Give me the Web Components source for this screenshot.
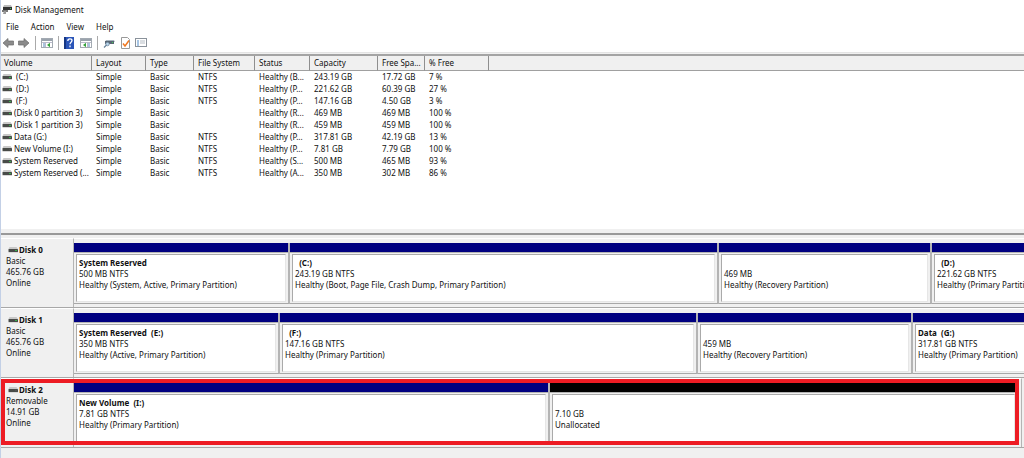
<!DOCTYPE html>
<html lang="en">
<head>
<meta charset="utf-8">
<title>Disk Management</title>
<style>
html,body{margin:0;height:100%}
body{background:#f0f0f0;color:#111;font:8px/11px "Noto Sans","Open Sans",sans-serif;overflow:hidden}
</style>
</head>
<body>
<disk-manager></disk-manager>
<script>
const define=(name,html,setup)=>customElements.define(name,class extends HTMLElement{
  constructor(){
    super();
    const t=document.createElement('template');
    t.innerHTML=html;
    this.attachShadow({mode:'open'}).append(t.content.cloneNode(true));
  }
  connectedCallback(){ if(setup) setup(this,this.shadowRoot); }
});

define('drive-icon',`
<style>:host{display:inline-block;width:10px;height:6px;flex:none}svg{display:block}:host([idle]) .led{fill:#555}</style>
<svg width="10" height="6" viewBox="0 0 10 6" aria-hidden="true">
<path d="M1.500 0h7L10 2H.5z" fill="#c9c9c9"/><rect x=".5" y="2" width="9.500" height="3" rx=".6" fill="#484b48"/>
<rect x=".5" y="5" width="9.500" height="1" fill="#d8d8d8"/><rect class="led" x="7" y="3" width="2" height="1" fill="#37b34a"/></svg>`);

define('title-bar',`
<style>:host{display:flex;align-items:center;gap:3px;height:19px;padding-left:1px;background:#fff}
h1{margin:0;font:inherit}svg{display:block}</style>
<svg width="10" height="11" viewBox="0 0 10 11" aria-hidden="true"><path d="M2 1h7l1 2H1z" fill="#bbb"/><rect x="1" y="3" width="9" height="3" fill="#333"/><rect x="8" y="4" width="1" height="1" fill="#3b5"/><path d="M0 6h6v2H0z" fill="#777"/><path d="M2 7h2v3H1z" fill="#999"/></svg>
<h1><slot></slot></h1>`);

define('menu-bar',`
<style>:host{display:block;background:#fff}nav{display:flex;height:14px;padding-left:5px;gap:12px}
button{all:unset;font:inherit;line-height:13px}</style>
<nav aria-label="Main menu"><button>File</button><button>Action</button><button>View</button><button>Help</button></nav>`);

define('tool-bar',`
<style>:host{display:flex;align-items:center;height:19px;padding-left:1px;background:#fff;border-bottom:1px solid #e4e4e4}
button{all:unset;display:block;margin-right:4px}svg{display:block}.book{width:12px}.book svg{margin:0 auto 0 0}i{width:1px;height:14px;background:#aaa;margin:0 5px 0 1px}</style>
<button aria-label="Back"><svg width="12" height="12" viewBox="0 0 12 12"><path d="M1 6l5-4.500V4h5.500v4H6v2.500z" fill="#8b8b8b" stroke="#6c6c6c" stroke-width=".7"/></svg></button>
<button aria-label="Forward"><svg width="12" height="12" viewBox="0 0 12 12"><path d="M11 6L6 1.500V4H.5v4H6v2.500z" fill="#8b8b8b" stroke="#6c6c6c" stroke-width=".7"/></svg></button>
<i></i>
<button aria-label="Show console tree"><svg width="12" height="12" viewBox="0 0 12 12"><rect x=".5" y="1.500" width="11" height="9" fill="#fff" stroke="#a3aab2"/><path d="M1 2h10v2H1z" fill="#9aa3ad"/><path d="M1 5.500h10M4.500 5v5" stroke="#bbc" fill="none"/><path d="M2 7h2M2 9h2" stroke="#5587bb"/><path d="M6 8l3-2.200v4.400z" fill="#35a33a"/></svg></button>
<i></i>
<button class="book" aria-label="Help"><svg width="10" height="12" viewBox="0 0 10 12"><rect width="10" height="12" fill="#2b55b8"/><path d="M0 0h2v12H0z" fill="#163784"/><path d="M3.800 4c0-3 4.200-2.600 4.200-.4C8 5.300 6 5.200 6 7.300M6 8.600v1.600" stroke="#fff" stroke-width="1.300" fill="none"/></svg></button>
<button aria-label="Show action pane"><svg width="12" height="12" viewBox="0 0 12 12"><rect x=".5" y="1.500" width="11" height="9" fill="#fff" stroke="#a3aab2"/><path d="M1 2h10v2H1z" fill="#9aa3ad"/><path d="M1 5.500h10M7.500 5v5" stroke="#bbc" fill="none"/><path d="M8 7h2M8 9h2" stroke="#5587bb"/><path d="M3 8l3-2.200v4.400z" fill="#35a33a"/></svg></button>
<i></i>
<button aria-label="Rescan disks"><svg width="12" height="12" viewBox="0 0 12 12"><path d="M3 3h8l1 2H2z" fill="#a9b6c0"/><rect x="2" y="4" width="9" height="3" fill="#596673"/><rect x="9" y="5" width="1" height="1" fill="#4c5"/><circle cx="4.500" cy="7" r="1.800" fill="#b9d6ec" stroke="#68839a" stroke-width=".7"/><path d="M3.500 8L1 10.500" stroke="#68839a" stroke-width="1.300"/></svg></button>
<button aria-label="Properties"><svg width="12" height="12" viewBox="0 0 12 12"><path d="M2.500.5h6l2 2v9h-8z" fill="#fff" stroke="#999"/><path d="M4 6.500l2 2.500 4-5.500" fill="none" stroke="#f07820" stroke-width="1.500"/></svg></button>
<button aria-label="Settings"><svg width="12" height="12" viewBox="0 0 12 12"><rect x=".5" y="1.500" width="11" height="8" fill="#fff" stroke="#8a929b"/><path d="M2 4h2M2 6h2M2 8h2" stroke="#4f8bc9"/><path d="M5 4h5M5 6h5" stroke="#b5bcc4"/></svg></button>`);

const volumes=[
['\u00a0(C:)','NTFS','B','243.19 GB','17.72 GB','7 %'],
['\u00a0(D:)','NTFS','P','221.62 GB','60.39 GB','27 %'],
['\u00a0(F:)','NTFS','P','147.16 GB','4.50 GB','3 %'],
['(Disk 0 partition 3)','','R','469 MB','469 MB','100 %'],
['(Disk 1 partition 3)','','R','459 MB','459 MB','100 %'],
['Data (G:)','NTFS','P','317.81 GB','42.19 GB','13 %'],
['New Volume (I:)','NTFS','P','7.81 GB','7.79 GB','100 %'],
['System Reserved','NTFS','S','500 MB','465 MB','93 %'],
['System Reserved (...','NTFS','A','350 MB','302 MB','86 %']];

define('volume-list',`
<style>
:host{display:block;background:#fff;border-top:2px solid #a4a4a4;padding-bottom:50px}
table{border-collapse:separate;border-spacing:0;table-layout:fixed;width:100%;line-height:12px}
th{box-sizing:border-box;height:15px;padding:0 0 0 4px;text-align:left;font-weight:400;background:#f0f0f0;border-right:1px solid #8f8f8f;border-bottom:1px solid #a0a0a0;white-space:nowrap;overflow:hidden}
th:first-child{padding-left:3px}th:last-child{border-right:0}
td{height:12px;padding:0 0 0 4px;white-space:nowrap;overflow:hidden}
td:first-child{padding-left:1px}
.v{display:flex;align-items:center;gap:2px}
</style>
<table><colgroup><col style="width:91px"><col style="width:54px"><col style="width:48px"><col style="width:61px"><col style="width:55px"><col style="width:68px"><col style="width:47px"><col style="width:64px"><col></colgroup>
<thead><tr><th>Volume</th><th>Layout</th><th>Type</th><th>File System</th><th>Status</th><th>Capacity</th><th>Free Spa...</th><th>% Free</th><th></th></tr></thead><tbody></tbody></table>`,
(el,root)=>{
  root.querySelector('tbody').innerHTML=volumes.map(([n,fs,s,c,f,p])=>
  `<tr><td><span class="v"><drive-icon${n.startsWith('New')?' idle':''}></drive-icon><span>${n}</span></span></td><td>Simple</td><td>Basic</td><td>${fs}</td><td>Healthy (${s}...</td><td>${c}</td><td>${f}</td><td>${p}</td><td></td></tr>`).join('');
});

define('disk-partition',`
<style>
:host{display:flex;flex-direction:column;min-width:0;box-sizing:border-box;border-right:2px solid #b4b4b4;border-bottom:1px solid #a8a8a8;overflow:hidden}
:host(:last-of-type){border-right:0}
.stripe{height:9px;background:#000080;border-bottom:1px solid #b4b4b4}
:host([unallocated]) .stripe{background:#000}
.body{flex:1;margin:1px 2px;padding:2px;background:#fff;border:1px solid #aaa;border-right-color:#e6e6e6;border-bottom-color:#e6e6e6;white-space:nowrap;overflow:hidden}
:host([cut]) .body{margin-right:0;padding-right:0;border-right:0}
b,span{display:block}b{min-height:11px;white-space:pre}
</style>
<div class="stripe"></div><div class="body"><b></b><span><slot name="size"></slot></span><span><slot></slot></span></div>`,
(el,root)=>{root.querySelector('b').textContent=el.getAttribute('name')||'';});

define('disk-row',`
<style>
:host{display:grid;grid-template-columns:73px minmax(0,1fr);height:70px;box-sizing:border-box;border-bottom:1px solid #a8a8a8;position:relative}
.label{padding:5px 0 0 5px;border-right:1px solid #b4b4b4;border-top:1px solid #fff}
.name{display:flex;align-items:center;gap:1px;padding-left:2px;font-weight:700}
.parts{display:grid;padding:4px 0 3px;border-top:1px solid #fff}
:host([selected]) .parts{margin-right:2px;padding-right:4px;border-right:1px solid #b4b4b4}
:host([selected])::after{content:"";position:absolute;inset:1px 5px 2px 0;border:4px solid #ed1c24}
span{display:block}
</style>
<div class="label"><div class="name"><drive-icon></drive-icon><span class="n"></span></div><slot name="info"></slot></div>
<div class="parts"><slot></slot></div>`,
(el,root)=>{
  root.querySelector('.n').textContent=el.getAttribute('name');
  if(el.hasAttribute('selected')) root.querySelector('drive-icon').setAttribute('idle','');
  root.querySelector('.parts').style.gridTemplateColumns=el.getAttribute('sizes').split(' ').map(n=>`minmax(0,${n}fr)`).join(' ');
});

define('disk-manager',`
<style>
:host{display:block;min-height:100%;box-sizing:border-box;border-left:1px solid #c3d0e6}
.edge{height:1px}
.split{height:4px;border-bottom:2px solid #999;margin-bottom:3px}
[slot=info] span{display:block}
</style>
<title-bar>Disk Management</title-bar><menu-bar></menu-bar><tool-bar></tool-bar><div class="edge"></div>
<volume-list></volume-list>
<div class="split"></div>
<disk-row name="Disk 0" sizes="216 429 213 92">
<div slot="info"><span>Basic</span><span>465.76 GB</span><span>Online</span></div>
<disk-partition name="System Reserved"><span slot="size">500 MB NTFS</span>Healthy (System, Active, Primary Partition)</disk-partition>
<disk-partition name="  (C:)"><span slot="size">243.19 GB NTFS</span>Healthy (Boot, Page File, Crash Dump, Primary Partition)</disk-partition>
<disk-partition><span slot="size">469 MB</span>Healthy (Recovery Partition)</disk-partition>
<disk-partition cut name="  (D:)"><span slot="size">221.62 GB NTFS</span>Healthy (Primary Partiti</disk-partition>
</disk-row>
<disk-row name="Disk 1" sizes="206 418 215 111">
<div slot="info"><span>Basic</span><span>465.76 GB</span><span>Online</span></div>
<disk-partition name="System Reserved  (E:)"><span slot="size">350 MB NTFS</span>Healthy (Active, Primary Partition)</disk-partition>
<disk-partition name="  (F:)"><span slot="size">147.16 GB NTFS</span>Healthy (Primary Partition)</disk-partition>
<disk-partition><span slot="size">459 MB</span>Healthy (Recovery Partition)</disk-partition>
<disk-partition cut name="Data  (G:)"><span slot="size">317.81 GB NTFS</span>Healthy (Primary Partition)</disk-partition>
</disk-row>
<disk-row name="Disk 2" sizes="476 467" selected>
<div slot="info"><span>Removable</span><span>14.91 GB</span><span>Online</span></div>
<disk-partition name="New Volume  (I:)"><span slot="size">7.81 GB NTFS</span>Healthy (Primary Partition)</disk-partition>
<disk-partition unallocated><span slot="size">7.10 GB</span>Unallocated</disk-partition>
</disk-row>`);
</script>
</body>
</html>
